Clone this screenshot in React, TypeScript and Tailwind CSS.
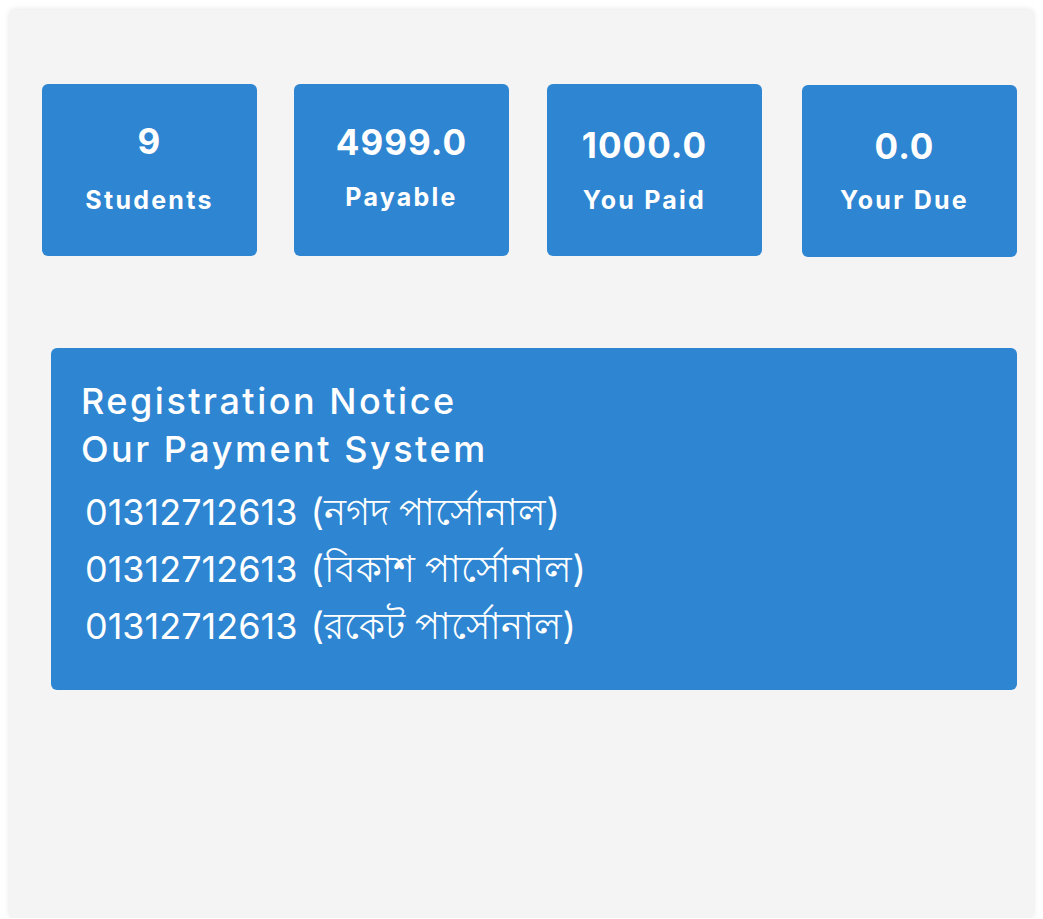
/**
 * Dashboard summary - stat cards and payment notice
 */

const stats = [
  { value: '9', label: 'Students', box: 'pt-[39px]', gap: 'mt-[29px]' },
  { value: '4999.0', label: 'Payable', box: 'ml-[37px] pt-[40px]', gap: 'mt-[25px]' },
  { value: '1000.0', label: 'You Paid', box: 'ml-[38px] pt-[43px] pr-[20px]', gap: 'mt-[25px]' },
  { value: '0.0', label: 'Your Due', box: 'ml-[40px] mt-px pt-[43px] pr-[10px]', gap: 'mt-[24px]' },
];

const numbers = [
  { phone: '01312712613', name: '(নগদ পার্সোনাল)' },
  { phone: '01312712613', name: '(বিকাশ পার্সোনাল)' },
  { phone: '01312712613', name: '(রকেট পার্সোনাল)' },
];

function StatCard({ value, label, box, gap }: (typeof stats)[number]): JSX.Element {
  return (
    <div className={`flex h-[172px] w-[215px] flex-col items-center rounded-md bg-[#2e85d1] text-white ${box}`}>
      <div className="text-[35px] font-bold leading-[36px] tracking-[0.03em]">{value}</div>
      <div className={`text-[25px] font-bold leading-[25px] tracking-[0.09em] ${gap}`}>{label}</div>
    </div>
  );
}

export default function App(): JSX.Element {
  return (
    <div className="bg-white font-['Inter','Noto_Sans',sans-serif]">
      <div className="mx-[10px] mt-[10px] h-[908px] rounded-sm bg-[#f4f4f4] shadow-[0_0_6px_rgba(0,0,0,0.12)]">
        {/* Stat cards */}
        <div className="flex items-start pl-[32px] pt-[74px]">
          {stats.map((s) => (
            <StatCard key={s.label} {...s} />
          ))}
        </div>

        {/* Payment notice */}
        <div className="ml-[41px] mr-[16px] mt-[91px] h-[342px] rounded-md bg-[#2e85d1] pl-[30px] pt-[29px] text-white">
          <div className="text-[36px] font-medium leading-[48px] tracking-[0.07em]">
            <div>Registration Notice</div>
            <div>Our Payment System</div>
          </div>
          <div className="mt-[10px] pl-[4px] text-[36px] leading-[57px]">
            {numbers.map((n) => (
              <div key={n.name} className="h-[57px] overflow-visible whitespace-nowrap">
                {n.phone} <span className="ml-[3px] text-[37px]">{n.name}</span>
              </div>
            ))}
          </div>
        </div>
      </div>
    </div>
  );
}
